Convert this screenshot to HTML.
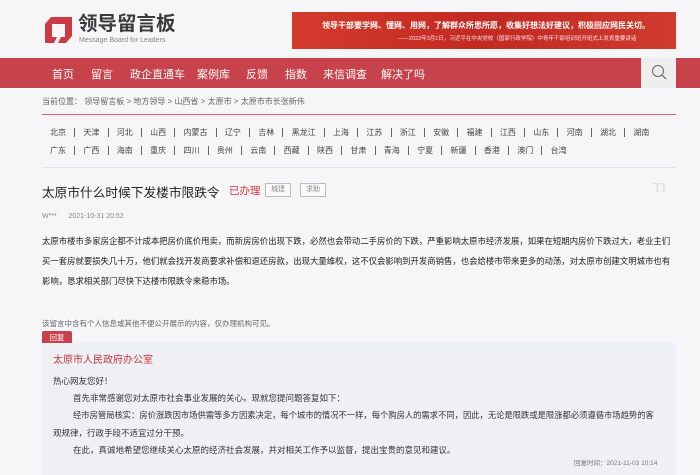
<!DOCTYPE html>
<html><head><meta charset="utf-8"><style>
*{margin:0;padding:0;box-sizing:border-box}
body{width:700px;height:475px;overflow:hidden;background:#f6f5f8;font-family:"Liberation Sans","Noto Sans CJK SC",sans-serif;color:#333;position:relative}
.a{position:absolute;white-space:nowrap}
.nav{position:absolute;left:0;top:58px;width:700px;height:30px;background:#c8424b}
.nav span{position:absolute;top:8px;color:#fff;font-size:11px}
.prov{position:absolute;left:46px;font-size:8px;color:#444;white-space:nowrap}
.prov span{display:inline-block;padding:0 8.2px;border-left:1px solid #666;line-height:9px}
.prov span:first-child{border-left:none;padding-left:4px}
.tag{position:absolute;top:183px;height:14px;width:26px;border:1px solid #bbb;background:#fafafa;font-size:7px;color:#888;text-align:center;line-height:12px}
.box{position:absolute;left:42px;top:343px;width:634px;height:132px;background:#eef0f5}
.rp{font-size:8.5px;color:#333}
</style></head><body>
<svg class="a" style="left:44px;top:16px" width="28" height="28" viewBox="0 0 28 28"><path fill="#cc3b44" fill-rule="evenodd" d="M7 1H28V20L22 27H14L17 21H21V8H8V21H13L10 27H1V8Z"/></svg>
<div class="a" style="left:78px;top:12px;font-size:19.5px;font-weight:bold;color:#3a3a3a;line-height:24px">领导留言板</div>
<div class="a" style="left:79px;top:37px;font-size:7px;color:#888">Message Board for Leaders</div>
<div class="a" style="left:292px;top:12px;width:384px;height:37px;background:linear-gradient(90deg,#d43a2c,#c22a22 50%,#d03a2e)"></div>
<div class="a" style="left:322px;top:20px;font-size:8px;color:#fff;font-weight:bold">领导干部要学网、懂网、用网，了解群众所思所愿，收集好想法好建议，积极回应网民关切。</div>
<div class="a" style="left:398px;top:34px;font-size:5.5px;color:#fde">——2022年3月1日，习近平在中央党校（国家行政学院）中青年干部培训班开班式上发表重要讲话</div>
<div class="nav"><span style="left:52px">首页</span><span style="left:91px">留言</span><span style="left:130px">政企直通车</span><span style="left:197px">案例库</span><span style="left:246px">反馈</span><span style="left:285px">指数</span><span style="left:323px">来信调查</span><span style="left:381px">解决了吗</span>
<div class="a" style="left:641px;top:0;width:35px;height:30px;background:#eeeeef"><svg width="35" height="30"><circle cx="17" cy="13" r="5.5" fill="none" stroke="#666" stroke-width="1"/><path d="M21 17L25 21" stroke="#666" stroke-width="1.2"/></svg></div></div>
<div class="a" style="left:42px;top:96px;font-size:8px;color:#666">当前位置： 领导留言板 &gt; 地方领导 &gt; 山西省 &gt; 太原市 &gt; 太原市市长张新伟</div>
<div class="a" style="left:42px;top:114px;width:634px;height:1px;background:#d66"></div>
<div class="prov" style="top:128px"><span>北京</span><span>天津</span><span>河北</span><span>山西</span><span>内蒙古</span><span>辽宁</span><span>吉林</span><span>黑龙江</span><span>上海</span><span>江苏</span><span>浙江</span><span>安徽</span><span>福建</span><span>江西</span><span>山东</span><span>河南</span><span>湖北</span><span>湖南</span></div>
<div class="prov" style="top:146px"><span>广东</span><span>广西</span><span>海南</span><span>重庆</span><span>四川</span><span>贵州</span><span>云南</span><span>西藏</span><span>陕西</span><span>甘肃</span><span>青海</span><span>宁夏</span><span>新疆</span><span>香港</span><span>澳门</span><span>台湾</span></div>
<div class="a" style="left:42px;top:167px;width:634px;height:1px;background:#e4e4e8"></div>
<div class="a" style="left:42px;top:182px;font-size:12.7px;color:#222">太原市什么时候下发楼市限跌令</div>
<div class="a" style="left:229px;top:183px;font-size:10.5px;color:#d33">已办理</div>
<div class="tag" style="left:265px">城建</div><div class="tag" style="left:300px">求助</div>
<div class="a" style="left:653px;top:181px;font-size:14px;color:#ddd;font-family:'Liberation Serif',serif">TI</div>
<div class="a" style="left:42px;top:213px;font-size:7px;color:#888">W***&nbsp;&nbsp;&nbsp;&nbsp;&nbsp;&nbsp;2021-10-31 20:52</div>
<div class="a" style="left:42px;top:231px;width:640px;font-size:8.4px;line-height:20px;white-space:normal;color:#222">太原市楼市多家房企都不计成本把房价底价甩卖，而新房房价出现下跌，必然也会带动二手房价的下跌，严重影响太原市经济发展，如果在短期内房价下跌过大，老业主们<br>买一套房就要损失几十万，他们就会找开发商要求补偿和退还房款，出现大量维权，这不仅会影响到开发商销售，也会给楼市带来更多的动荡，对太原市创建文明城市也有<br>影响，恳求相关部门尽快下达楼市限跌令来稳市场。</div>
<div class="a" style="left:42px;top:318px;font-size:7.5px;color:#666">该留言中含有个人信息或其他不便公开展示的内容，仅办理机构可见。</div>
<div class="a" style="left:42px;top:331px;width:30px;height:13px;background:#c8424b;color:#fff;font-size:7.5px;text-align:center;line-height:13px;border-radius:2px 2px 0 0">回复</div>
<div class="box">
<div class="a" style="left:11px;top:8px;font-size:10px;color:#c9343e">太原市人民政府办公室</div>
<div class="a rp" style="left:11px;top:32px">热心网友您好！</div>
<div class="a rp" style="left:31px;top:49px">首先非常感谢您对太原市社会事业发展的关心。现就您提问题答复如下：</div>
<div class="a rp" style="left:31px;top:66px;font-size:8.3px">经市房管局核实：房价涨跌因市场供需等多方因素决定，每个城市的情况不一样，每个购房人的需求不同，因此，无论是限跌或是限涨都必须遵循市场趋势的客</div>
<div class="a rp" style="left:11px;top:84px">观规律，行政手段不适宜过分干预。</div>
<div class="a rp" style="left:31px;top:101px">在此，真诚地希望您继续关心太原的经济社会发展，并对相关工作予以监督，提出宝贵的意见和建议。</div>
<div class="a" style="left:532px;top:114px;font-size:6.5px;color:#777">回复时间：2021-11-03 10:14</div>
</div>
</body></html>
